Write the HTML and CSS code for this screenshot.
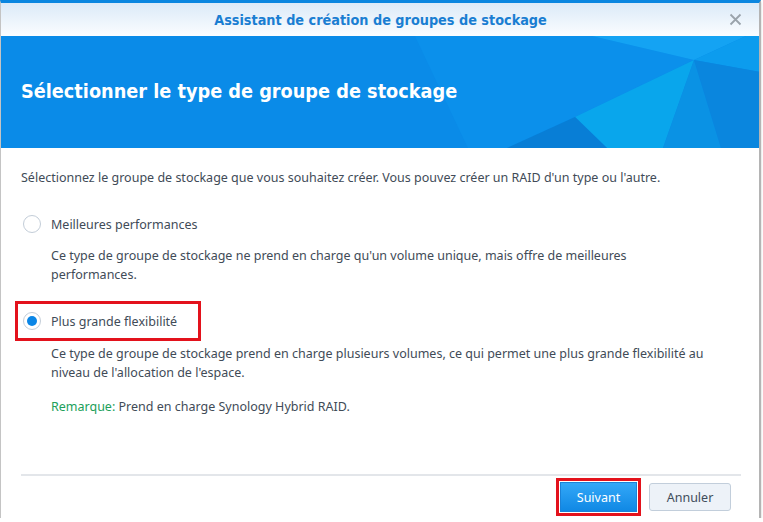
FILE: index.html
```html
<!DOCTYPE html>
<html lang="fr">
<head>
<meta charset="utf-8">
<title>Assistant de création de groupes de stockage</title>
<link rel="stylesheet" href="styles.css">
</head>
<body>
<div class="window">
  <div class="titlebar">
    <span class="title">Assistant de création de groupes de stockage</span>
    <span class="close" aria-label="Fermer">
      <svg width="13" height="13" viewBox="0 0 13 13"><path d="M1.5 1.5 L11.5 11.5 M11.5 1.5 L1.5 11.5" stroke="#9aa3ab" stroke-width="1.8" fill="none"/></svg>
    </span>
  </div>
  <div class="banner">
    <svg class="banner-art" width="759" height="112" viewBox="0 0 759 112" preserveAspectRatio="none">
      <rect width="759" height="112" fill="#0a8be8"/>
      <polygon points="414,0 591,0 693,24 574,81 506,112 467,112" fill="#0b90eb"/>
      <polygon points="591,0 745,0 693,24" fill="#14a3f3"/>
      <polygon points="745,0 759,0 759,36 693,24" fill="#0c9cee"/>
      <polygon points="693,24 574,81 606,112 662,112" fill="#09a6ec"/>
      <polygon points="693,24 662,112 720,112" fill="#0a92e4"/>
      <polygon points="574,81 606,112 506,112" fill="#087ed6"/>
      <polygon points="693,24 759,36 759,112 720,112" fill="#0a86de"/>
    </svg>
    <h1 class="banner-title">Sélectionner le type de groupe de stockage</h1>
  </div>
  <div class="content">
    <p class="intro">Sélectionnez le groupe de stockage que vous souhaitez créer. Vous pouvez créer un RAID d'un type ou l'autre.</p>

    <div class="option">
      <span class="radio"></span>
      <span class="option-label">Meilleures performances</span>
    </div>
    <p class="desc">Ce type de groupe de stockage ne prend en charge qu'un volume unique, mais offre de meilleures performances.</p>

    <div class="option option-marked">
      <span class="radio radio-checked"></span>
      <span class="option-label">Plus grande flexibilité</span>
    </div>
    <p class="desc desc-second">Ce type de groupe de stockage prend en charge plusieurs volumes, ce qui permet une plus grande flexibilité au niveau de l'allocation de l'espace.</p>
    <p class="remark"><span class="remark-key">Remarque:</span> Prend en charge Synology Hybrid RAID.</p>
  </div>
  <div class="separator"></div>
  <div class="footer">
    <button class="btn btn-primary">Suivant</button>
    <button class="btn btn-secondary">Annuler</button>
  </div>
</div>
</body>
</html>
```
FILE: styles.css
```css
* { box-sizing: border-box; }
html, body { margin: 0; padding: 0; background: #ffffff; }
body {
  font-family: "Noto Sans", "DejaVu Sans", sans-serif;
  font-size: 12.5px;
  color: #414b57;
}
.window {
  width: 761px;
  height: 518px;
  display: flex;
  flex-direction: column;
  background: #ffffff;
  border-top: 3px solid #0a86e0;
  border-left: 1px solid #c4c4c4;
  border-right: 2px solid #b4b4b4;
  box-shadow: 0 2px 2px rgba(0,0,0,0.22);
}
.titlebar {
  height: 33px;
  flex: none;
  display: flex;
  align-items: center;
  justify-content: center;
  position: relative;
  background: linear-gradient(#dbeaf8, #fbfdff);
}
.title {
  font-family: "Liberation Sans Narrow", "DejaVu Sans Condensed", "Liberation Sans", sans-serif;
  font-weight: bold;
  font-size: 14.3px;
  color: #1a7ed2;
  margin-left: 1px;
}
.close {
  position: absolute;
  right: 17px;
  top: 10px;
  width: 13px;
  height: 13px;
  display: flex;
}
.banner {
  height: 112px;
  flex: none;
  position: relative;
  overflow: hidden;
  display: flex;
  align-items: center;
  padding-left: 20px;
}
.banner-art {
  position: absolute;
  left: 0;
  top: 0;
}
.banner-title {
  position: relative;
  margin: 0;
  padding-bottom: 2px;
  font-family: "Liberation Sans Narrow", "DejaVu Sans Condensed", "Liberation Sans", sans-serif;
  font-weight: bold;
  font-size: 19.7px;
  color: #ffffff;
}
.content {
  flex: 1;
  padding: 20px 20px 0 20px;
}
.intro {
  margin: 0;
  line-height: 19px;
}
.option {
  display: flex;
  align-items: center;
  height: 34px;
  width: 180px;
  margin: 20px 0 0 -3px;
  padding: 0 0 0 5px;
}
.option-marked {
  outline: 3px solid #e3121c;
}
.radio {
  width: 18px;
  height: 18px;
  border-radius: 50%;
  border: 1px solid #c3cdd8;
  background: #ffffff;
  flex: none;
  display: flex;
  align-items: center;
  justify-content: center;
  margin-right: 10px;
}
.radio-checked::after {
  content: "";
  width: 10px;
  height: 10px;
  border-radius: 50%;
  background: #0a86e6;
}
.option-label {
  white-space: nowrap;
  line-height: 19px;
}
.desc {
  margin: 5px 0 0 30px;
  line-height: 19px;
  width: 658px;
}
.desc-second {
  margin-top: 6px;
}
.remark {
  margin: 15px 0 0 30px;
  line-height: 19px;
}
.remark-key {
  color: #20a05a;
}
.separator {
  flex: none;
  height: 2px;
  margin: 0 18px 0 20px;
  background: #e3e6ea;
}
.footer {
  flex: none;
  height: 42px;
  display: flex;
  align-items: center;
  justify-content: flex-end;
  gap: 12px;
  padding-right: 28px;
}
.btn {
  font-family: "Noto Sans", "DejaVu Sans", sans-serif;
  font-size: 12.5px;
  border-radius: 3px;
  cursor: pointer;
  padding: 0;
}
.btn-primary {
  width: 77px;
  height: 30px;
  color: #ffffff;
  border: 1px solid #1b82d8;
  background: linear-gradient(#33a8f8, #1088e4);
  outline: 3px solid #e3121c;
  outline-offset: 1px;
  border-radius: 0;
}
.btn-secondary {
  width: 82px;
  height: 28px;
  color: #3f4d5b;
  border: 1px solid #c2cedb;
  background: #edf2f8;
}
```
